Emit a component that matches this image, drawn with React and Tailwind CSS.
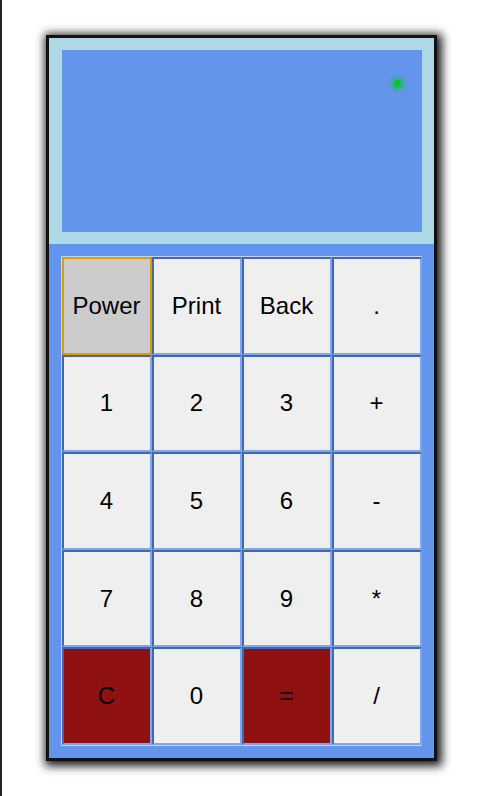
import React from "react";

const keys = [
    ["Power", "Print", "Back", "."],
    ["1", "2", "3", "+"],
    ["4", "5", "6", "-"],
    ["7", "8", "9", "*"],
    ["C", "0", "=", "/"],
];

function Key({ label }) {
    if (label === "Power") {
        return (
            <button className="flex items-center justify-center bg-[#cccccc] border-2 border-[#e69a00] rounded-[3px] text-[24px] text-black">
                {label}
            </button>
        );
    }
    const red = label === "C" || label === "=";
    return (
        <button
            className={`flex items-center justify-center border-2 border-t-[#4566a8] border-l-[#4566a8] border-b-[#7ea6f2] border-r-[#7ea6f2] text-[24px] text-black ${red ? "bg-[#8f1111]" : "bg-[#efefef]"}`}
        >
            {label}
        </button>
    );
}

export default function App() {
    return (
        <div
            className="h-[796px] border-l-2 border-[#222222] bg-white pt-[35px] flex justify-center"
            style={{ fontFamily: '"Liberation Sans", Arial, sans-serif' }}
        >
            <div className="w-[391px] h-[726px] border-[3px] border-[#111111] shadow-[2px_2px_9px_3px_rgba(0,0,0,0.9)] flex flex-col">
                {/* display */}
                <div className="bg-[#add8e6] p-3 pl-[13px]">
                    <div className="relative h-[182px] bg-[#6495ed]">
                        <div className="absolute top-[30px] right-[21px] w-[7px] h-[7px] rounded-full bg-[#00cc22] shadow-[0_0_5px_3px_rgba(0,200,40,0.6)]" />
                    </div>
                </div>
                {/* keypad */}
                <div className="flex-1 bg-[#6495ed] pt-3 pl-[12px] pr-3">
                    <div className="grid grid-cols-4 grid-rows-5 h-[490px] border-l border-t border-b border-[#c4d6f8]">
                        {keys.flat().map((k) => (
                            <Key key={k} label={k} />
                        ))}
                    </div>
                </div>
            </div>
        </div>
    );
}
